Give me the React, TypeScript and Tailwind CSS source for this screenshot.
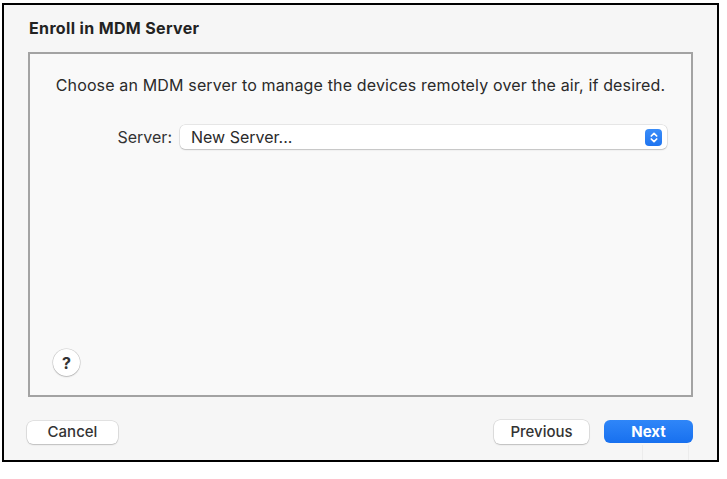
const font = { fontFamily: 'Inter, "Liberation Sans", Arial, sans-serif' }

const Stepper = () => (
  <div className="w-[17px] h-[17px] rounded-[4px] bg-gradient-to-b from-[#3a8df8] to-[#1f74f0] flex items-center justify-center">
    <svg width="10" height="13" viewBox="0 0 10 13" fill="none">
      <path d="M2.3 5 L5 2.3 L7.7 5" stroke="white" strokeWidth="1.7" strokeLinecap="round" strokeLinejoin="round" />
      <path d="M2.3 8 L5 10.7 L7.7 8" stroke="white" strokeWidth="1.7" strokeLinecap="round" strokeLinejoin="round" />
    </svg>
  </div>
)

export default function App() {
  return (
    <div className="w-[727px] h-[479px] bg-white pl-[2px] pt-[3px]" style={font}>
      <div className="relative w-[717px] h-[459px] border-2 border-black bg-[#f6f6f6] flex flex-col">
        <h1 className="pl-[25px] pt-[13px] text-[16px] leading-[20px] font-bold tracking-[0.35px] text-[#222]">
          Enroll in MDM Server
        </h1>

        <div className="mt-[14px] ml-[24px] w-[665px] h-[345px] border-2 border-[#a3a3a3] bg-[#f9f9f9] flex flex-col">
          <p className="pt-[21px] text-center text-[16px] leading-[20px] tracking-[0.15px] text-[#2a2a2a]">
            Choose an MDM server to manage the devices remotely over the air, if desired.
          </p>

          <div className="mt-[30px] pr-[24px] flex items-center justify-end gap-[8px]">
            <span className="text-[16px] text-[#333]">Server:</span>
            <div className="w-[487px] h-[24px] bg-white rounded-[5px] shadow-[0_0_0_0.5px_rgba(0,0,0,0.14),0_1px_1.5px_rgba(0,0,0,0.16)] flex items-center justify-between pl-[11px] pr-[5px]">
              <span className="text-[16px] text-[#2a2a2a]">New Server...</span>
              <Stepper />
            </div>
          </div>

          <div className="mt-auto mb-[19px] ml-[23px] w-[27px] h-[27px] rounded-full bg-white shadow-[0_0_0_0.5px_rgba(0,0,0,0.18),0_1px_1.5px_rgba(0,0,0,0.18)] flex items-center justify-center text-[16px] font-bold text-[#333]">
            ?
          </div>
        </div>

        <div className="mt-[23px] pl-[23px] pr-[24px] flex items-center">
          <button className="w-[91px] h-[23px] rounded-[6px] bg-white shadow-[0_0_0_0.5px_rgba(0,0,0,0.16),0_1px_1.5px_rgba(0,0,0,0.16)] text-[15px] font-medium text-[#333]">
            Cancel
          </button>
          <div className="ml-auto flex gap-[15px]">
            <button className="w-[95px] h-[24px] rounded-[6px] bg-white shadow-[0_0_0_0.5px_rgba(0,0,0,0.16),0_1px_1.5px_rgba(0,0,0,0.16)] text-[15px] font-medium text-[#333]">
              Previous
            </button>
            <button className="w-[89px] h-[23px] rounded-[6px] bg-gradient-to-b from-[#2f86f8] to-[#1770ef] text-[15px] font-bold text-white leading-[20px]">
              Next
            </button>
          </div>
        </div>

        <div className="absolute left-[638px] top-[440px] w-px h-[15px] bg-[#ececec]" />
        <div className="absolute left-[684px] top-[440px] w-px h-[15px] bg-[#ececec]" />
      </div>
    </div>
  )
}
